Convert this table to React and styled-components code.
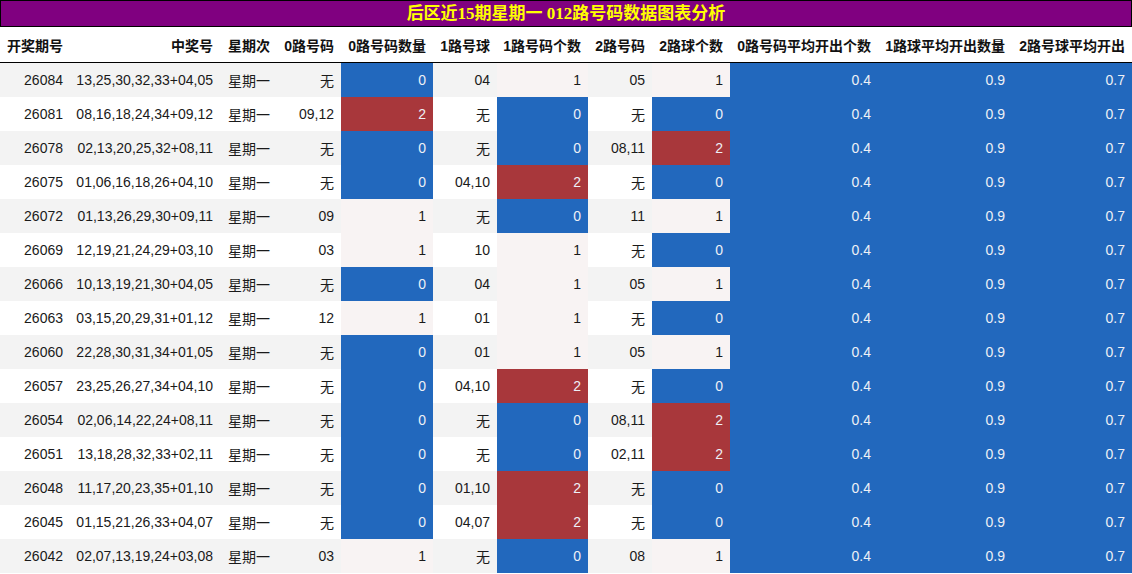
import React from "react";
import styled, { createGlobalStyle } from "styled-components";

const Global = createGlobalStyle`
  html, body { margin: 0; padding: 0; background: #fff; }
  body { font-family: "Liberation Sans", "Noto Sans CJK SC", sans-serif; }
`;

const COLS = "70px 150px 57px 64px 92px 64px 91px 64px 78px 148px 134px 120px";

const Page = styled.div`
  width: 1132px;
`;

const Title = styled.div`
  box-sizing: border-box;
  height: 27px;
  background: #800080;
  border: 1px solid #000;
  color: #ffff00;
  font-family: "Liberation Serif", "Noto Sans CJK SC", serif;
  font-weight: bold;
  font-size: 17px;
  display: flex;
  align-items: center;
  justify-content: center;
  line-height: 1;
`;

const Grid = styled.div`
  display: grid;
  grid-template-columns: ${COLS};
`;

const HeadRow = styled(Grid)`
  height: 35px;
  border-bottom: 1px solid #000;
`;

const HeadCell = styled.div`
  display: flex;
  align-items: center;
  justify-content: flex-end;
  padding-right: 7px;
  font-size: 14px;
  font-weight: bold;
  color: #111;
  white-space: nowrap;
  overflow: hidden;
`;

const Row = styled(Grid)`
  height: 34px;
  background: ${(p) => (p.$odd ? "#f3f3f3" : "#ffffff")};
`;

const BG = { blue: "#2268bd", red: "#a8373b", pink: "#f8f3f3" };

const Cell = styled.div`
  display: flex;
  align-items: center;
  justify-content: flex-end;
  padding-right: 7px;
  font-size: 14px;
  color: ${(p) => (p.$tone === "blue" || p.$tone === "red" ? "#eef0f6" : "#1a1a1a")};
  background: ${(p) => (p.$tone ? BG[p.$tone] : "transparent")};
  white-space: nowrap;
`;

const headers = [
  "开奖期号", "中奖号", "星期次", "0路号码", "0路号码数量", "1路号球",
  "1路号码个数", "2路号码", "2路球个数", "0路号码平均开出个数", "1路球平均开出数量", "2路号球平均开出",
];

const data = [
  ["26084", "13,25,30,32,33+04,05", "无", 0, "04", 1, "05", 1],
  ["26081", "08,16,18,24,34+09,12", "09,12", 2, "无", 0, "无", 0],
  ["26078", "02,13,20,25,32+08,11", "无", 0, "无", 0, "08,11", 2],
  ["26075", "01,06,16,18,26+04,10", "无", 0, "04,10", 2, "无", 0],
  ["26072", "01,13,26,29,30+09,11", "09", 1, "无", 0, "11", 1],
  ["26069", "12,19,21,24,29+03,10", "03", 1, "10", 1, "无", 0],
  ["26066", "10,13,19,21,30+04,05", "无", 0, "04", 1, "05", 1],
  ["26063", "03,15,20,29,31+01,12", "12", 1, "01", 1, "无", 0],
  ["26060", "22,28,30,31,34+01,05", "无", 0, "01", 1, "05", 1],
  ["26057", "23,25,26,27,34+04,10", "无", 0, "04,10", 2, "无", 0],
  ["26054", "02,06,14,22,24+08,11", "无", 0, "无", 0, "08,11", 2],
  ["26051", "13,18,28,32,33+02,11", "无", 0, "无", 0, "02,11", 2],
  ["26048", "11,17,20,23,35+01,10", "无", 0, "01,10", 2, "无", 0],
  ["26045", "01,15,21,26,33+04,07", "无", 0, "04,07", 2, "无", 0],
  ["26042", "02,07,13,19,24+03,08", "03", 1, "无", 0, "08", 1],
];

const toneFor = (n) => (n === 0 ? "blue" : n === 2 ? "red" : "pink");

export default function App() {
  return (
    <Page>
      <Global />
      <Title>后区近15期星期一 012路号码数据图表分析</Title>
      <HeadRow>
        {headers.map((h) => (
          <HeadCell key={h}>{h}</HeadCell>
        ))}
      </HeadRow>
      {data.map((r, i) => (
        <Row key={r[0]} $odd={i % 2 === 0}>
          <Cell>{r[0]}</Cell>
          <Cell>{r[1]}</Cell>
          <Cell>星期一</Cell>
          <Cell>{r[2]}</Cell>
          <Cell $tone={toneFor(r[3])}>{r[3]}</Cell>
          <Cell>{r[4]}</Cell>
          <Cell $tone={toneFor(r[5])}>{r[5]}</Cell>
          <Cell>{r[6]}</Cell>
          <Cell $tone={toneFor(r[7])}>{r[7]}</Cell>
          <Cell $tone="blue">0.4</Cell>
          <Cell $tone="blue">0.9</Cell>
          <Cell $tone="blue">0.7</Cell>
        </Row>
      ))}
    </Page>
  );
}
